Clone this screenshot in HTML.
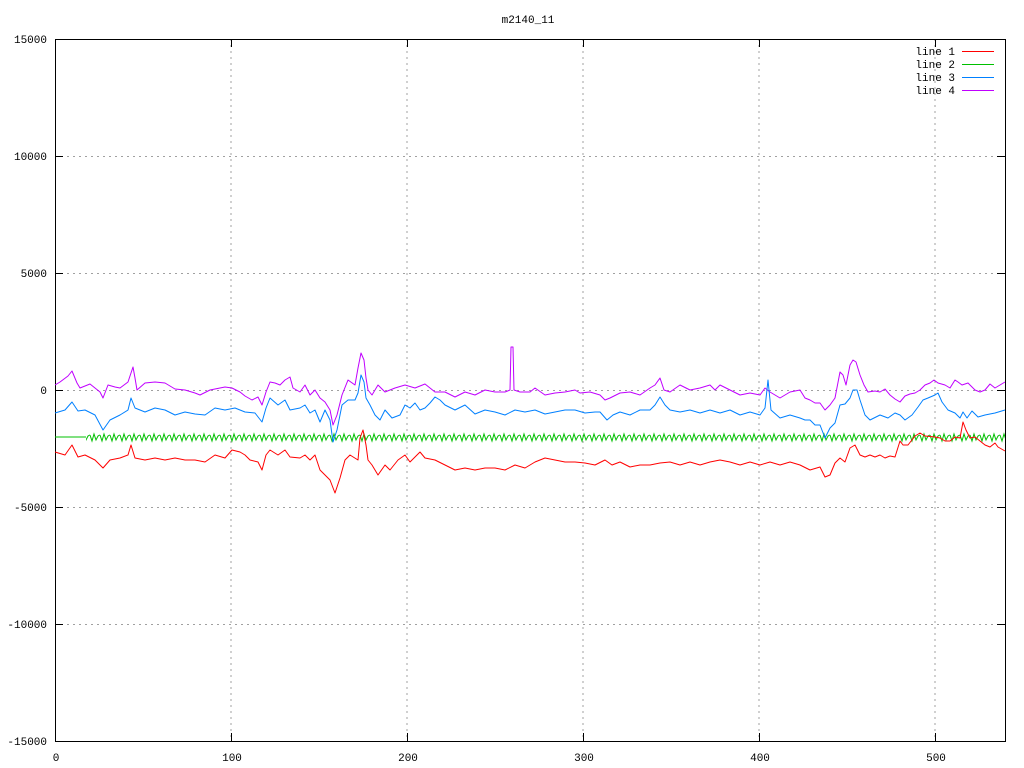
<!DOCTYPE html>
<html><head><meta charset="utf-8"><style>
html,body{margin:0;padding:0;background:#fff;}
svg{display:block;}
text{font-family:"Liberation Mono","DejaVu Sans Mono",monospace;font-size:11px;fill:#000;}
</style></head><body>
<svg width="1024" height="768" viewBox="0 0 1024 768" xmlns="http://www.w3.org/2000/svg">
<defs>
<pattern id="zz" x="0" y="430" width="10" height="14" patternUnits="userSpaceOnUse">
<path d="M0 5 L2 11 L4 4 L6 10 L8 6 L10 5" stroke="#00c000" stroke-width="1" fill="none"/>
</pattern>
</defs>
<rect width="1024" height="768" fill="#fff"/>
<g stroke="#a0a0a0" stroke-width="1" stroke-dasharray="2,4" fill="none">
<path d="M231 39V741M407 39V741M583 39V741M759 39V741M935 39V741"/>
<path d="M55 156.5H1005M55 273.5H1005M55 390.5H1005M55 507.5H1005M55 624.5H1005"/>
</g>
<g stroke="#000" stroke-width="1" fill="none">
<rect x="55.5" y="39.5" width="950" height="702"/>
<path d="M55 156.5h8M55 273.5h8M55 390.5h8M55 507.5h8M55 624.5h8M1005 156.5h-8M1005 273.5h-8M1005 390.5h-8M1005 507.5h-8M1005 624.5h-8"/>
<path d="M231.5 741v-8M407.5 741v-8M583.5 741v-8M759.5 741v-8M935.5 741v-8M231.5 39v8M407.5 39v8M583.5 39v8M759.5 39v8M935.5 39v8"/>
</g>
<g text-anchor="end">
<text x="47" y="43">15000</text>
<text x="47" y="160">10000</text>
<text x="47" y="277">5000</text>
<text x="47" y="394">0</text>
<text x="47" y="511">-5000</text>
<text x="47" y="628">-10000</text>
<text x="47" y="745">-15000</text>
</g>
<g text-anchor="middle">
<text x="56" y="761">0</text>
<text x="232" y="761">100</text>
<text x="408" y="761">200</text>
<text x="584" y="761">300</text>
<text x="760" y="761">400</text>
<text x="936" y="761">500</text>
<text x="528" y="23">m2140_11</text>
</g>
<g text-anchor="end">
<text x="955" y="55">line 1</text>
<text x="955" y="68">line 2</text>
<text x="955" y="81">line 3</text>
<text x="955" y="94">line 4</text>
</g>
<path d="M962 51.5h32" stroke="#ff0000"/>
<path d="M962 64.5h32" stroke="#00c000"/>
<path d="M962 77.5h32" stroke="#0080ff"/>
<path d="M962 90.5h32" stroke="#c000ff"/>

<g fill="none" stroke-width="1" stroke-linejoin="round">
<rect x="86" y="430" width="919" height="14" fill="url(#zz)"/>
<path d="M55 437H86" stroke="#00c000"/>
<polyline stroke="#c000ff" points="55,385 60,382 68,376 72,371 77,383 80,388 90,384 100,392 103,398 108,385 115,387 120,388 128,382 133,367 135,378 137,390 145,383 155,382 165,383 175,389 185,390 195,393 200,395 210,390 225,387 232,388 240,392 245,396 252,400 258,397 262,405 266,392 270,382 275,383 280,385 285,380 290,377 293,388 300,392 305,385 310,395 315,390 320,398 325,402 330,410 333,425 337,415 342,395 348,380 355,385 358,368 361,353 364,360 366,378 368,390 372,395 378,385 385,392 395,388 405,385 415,388 425,384 435,392 445,392 455,397 465,392 475,395 485,390 495,392 505,392 510,390 511,347 513,347 514,390 520,392 530,392 535,388 545,395 555,393 565,392 575,390 580,393 590,392 600,395 605,400 610,398 620,393 630,392 640,395 650,388 655,385 660,378 664,390 670,392 680,385 690,390 700,388 710,385 715,390 720,385 730,390 740,395 750,393 760,395 765,388 770,392 780,398 790,392 800,390 805,398 810,400 815,403 820,403 825,410 830,405 835,398 840,372 843,375 846,385 850,365 853,360 856,362 860,375 864,385 868,392 875,391 880,392 885,389 890,395 895,399 900,402 905,396 910,394 915,393 920,390 925,385 930,383 934,380 938,383 945,385 950,388 955,380 958,382 962,385 968,383 975,390 980,392 985,390 990,384 995,388 1000,385 1005,382"/>
<polyline stroke="#0080ff" points="55,413 65,410 72,402 78,411 85,410 95,415 103,430 110,420 120,415 128,410 131,398 135,408 145,412 155,408 165,410 175,415 185,412 195,414 205,415 215,408 225,410 235,408 245,412 255,413 262,422 266,408 270,398 278,405 285,400 290,410 300,408 305,405 310,413 315,410 320,422 325,410 330,420 333,442 337,430 342,405 348,400 355,400 358,393 361,375 364,382 366,398 370,405 375,415 380,420 385,410 392,418 400,415 405,405 410,408 415,403 420,410 425,408 430,403 435,397 440,400 445,405 455,410 465,405 475,414 485,410 495,412 505,415 515,410 525,412 535,410 545,414 555,412 565,410 575,410 585,413 595,412 600,412 607,420 613,415 620,412 630,415 640,410 650,410 655,405 660,397 665,405 670,410 680,412 690,410 700,413 710,410 720,413 730,410 740,415 750,412 760,415 765,408 768,380 771,410 780,418 790,415 800,418 805,420 810,420 815,425 820,425 825,438 830,428 835,423 840,405 845,404 850,398 853,390 857,390 860,400 865,415 870,420 880,415 888,418 895,413 900,415 905,420 912,415 918,407 923,400 928,398 935,395 938,393 942,402 948,410 955,413 960,418 963,412 967,418 972,411 978,417 985,415 995,413 1005,410"/>
<polyline stroke="#ff0000" points="55,452 65,455 72,445 78,457 85,455 95,460 103,468 110,460 120,458 128,455 131,445 135,458 145,460 155,458 165,460 175,458 185,460 195,460 205,462 215,455 225,458 232,450 240,452 245,455 250,460 258,462 262,470 266,455 270,450 278,455 285,450 290,457 300,458 305,455 310,460 315,455 320,470 325,475 330,480 335,493 340,478 345,460 350,455 358,460 360,438 363,430 366,445 368,460 372,465 378,475 385,465 390,470 398,460 405,455 410,462 420,452 425,458 435,460 445,465 455,470 465,468 475,470 485,468 495,468 505,470 515,465 525,468 535,462 545,458 555,460 565,462 575,462 585,463 595,465 605,460 612,465 620,462 630,467 640,465 650,465 660,463 670,462 680,465 690,462 700,465 710,462 720,460 730,462 740,465 750,462 760,465 770,462 780,465 790,462 800,465 810,470 820,467 825,477 830,475 835,463 840,458 845,462 850,448 855,445 860,455 865,457 870,455 875,457 880,455 885,458 890,456 895,457 900,441 903,445 908,445 915,436 920,433 925,436 935,437 940,438 945,441 950,441 955,437 960,438 963,422 966,430 970,438 975,437 985,445 990,447 995,443 998,447 1005,451"/>
</g>
</svg>
</body></html>
